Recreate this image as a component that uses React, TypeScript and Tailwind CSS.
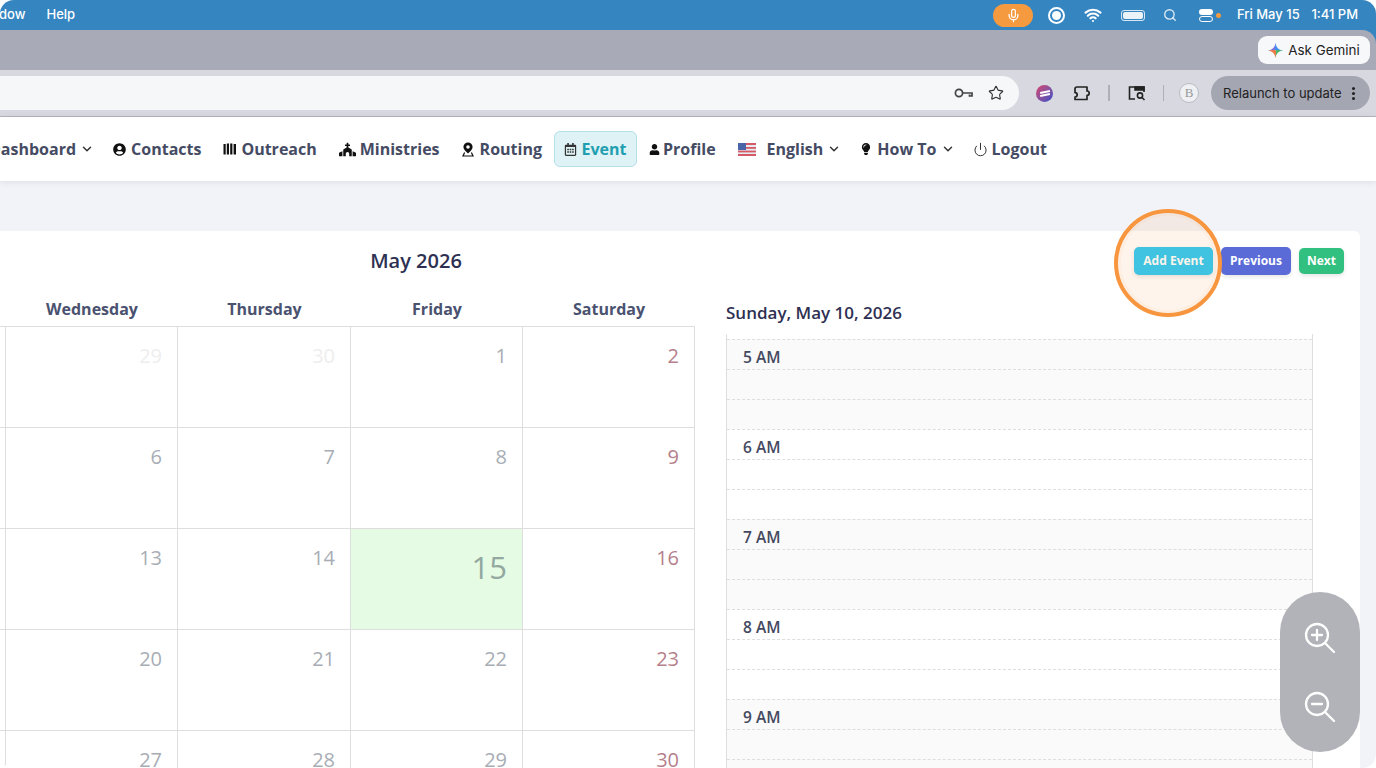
import { ChevronDown, Star, Power, Search, Wifi, Mic } from "lucide-react";
import { FaChurch, FaLightbulb, FaRegCalendarAlt, FaUser, FaUserCircle } from "react-icons/fa";

const OutreachIcon = () => (
  <svg width="14" height="12" viewBox="0 0 14 12" fill="#111">
    <rect x="0.5" y="1" width="2.2" height="10.5" />
    <rect x="3.8" y="0.5" width="2.2" height="11" />
    <rect x="7.2" y="0.5" width="2.2" height="11" />
    <rect x="10.6" y="1" width="2.4" height="10.5" />
  </svg>
);

const RoutingIcon = () => (
  <svg className="mr-[6px]" width="12" height="15" viewBox="0 0 12 15" fill="none">
    <path fillRule="evenodd" d="M6 0.5A4.6 4.6 0 0 1 10.6 5C10.6 7.6 8 9.6 6 11.5C4 9.6 1.4 7.6 1.4 5A4.6 4.6 0 0 1 6 0.5ZM6 3.2A1.8 1.8 0 1 0 6 6.8A1.8 1.8 0 0 0 6 3.2Z" fill="#111" />
    <path d="M2.6 10.5L1 14H11L9.4 10.5" stroke="#111" strokeWidth="1.2" />
  </svg>
);

const UsFlag = () => (
  <svg width="18" height="13" viewBox="0 0 18 13">
    <rect width="18" height="13" rx="1.5" fill="#e8eaf0" />
    <rect y="0" width="18" height="2" fill="#d45a68" />
    <rect y="4" width="18" height="1.8" fill="#d45a68" />
    <rect y="7.6" width="18" height="1.8" fill="#d45a68" />
    <rect y="11" width="18" height="2" fill="#d45a68" />
    <rect width="8" height="7" fill="#4a64a8" />
  </svg>
);

const GeminiIcon = () => (
  <svg width="15" height="15" viewBox="0 0 14 14">
    <path d="M7 0C7.4 3.6 7.8 6 7 7C6 7.6 3.6 7.4 0 7C4 6.5 6.5 4 7 0Z" fill="#7a6fe0" />
    <path d="M7 0C7.5 4 10 6.5 14 7C10.4 7.4 8 7.6 7 7C6.2 6 6.6 3.6 7 0Z" fill="#3f8ff0" />
    <path d="M14 7C10 7.5 7.5 10 7 14C6.6 10.4 6.2 8 7 7C8 6.4 10.4 6.6 14 7Z" fill="#4fb56a" />
    <path d="M0 7C4 7.5 6.5 10 7 14C7.4 10.4 7.8 8 7 7C6 6.4 3.6 6.6 0 7Z" fill="#ee7a45" />
  </svg>
);

const ExtensionIcon = () => (
  <svg className="ml-[19px]" width="18" height="18" viewBox="0 0 18 18" fill="none" stroke="#222" strokeWidth="1.7" strokeLinejoin="round">
    <path d="M5 3H15V7A2.2 2.2 0 0 1 15 11.4V15.5H3V13A2.2 2.2 0 0 0 3 8.6V5A2 2 0 0 1 5 3Z" />
  </svg>
);

const ZoomGlyph = ({ plus }: { plus?: boolean }) => (
  <svg width="34" height="34" viewBox="0 0 34 34" fill="none" stroke="white" strokeWidth="2.3" strokeLinecap="round">
    <circle cx="14" cy="14" r="11" />
    <path d="M22 22L31 31" />
    <path d="M9 14H19" />
    {plus && <path d="M14 9V19" />}
  </svg>
);

const NavItem = ({ icon, label, chevron, className = "" }: { icon?: React.ReactNode; label: string; chevron?: boolean; className?: string }) => (
  <div className={`flex items-center shrink-0 ${className}`}>
    {icon}
    <span className="text-[16px] font-bold text-[#454b63] whitespace-nowrap">{label}</span>
    {chevron && <ChevronDown size={14} strokeWidth={2.5} className="text-[#333] ml-[4px]" />}
  </div>
);

const MenuBar = () => (
  <div className="h-[30px] bg-[#3585c1] flex items-center text-white text-[13px] font-medium font-['Inter',sans-serif]">
    <span className="-ml-[1px]">dow</span>
    <span className="ml-[21px]">Help</span>
    <div className="ml-auto flex items-center">
      <div className="w-[40px] h-[23px] rounded-full bg-[#f59a3e] flex items-center justify-center">
        <Mic size={15} strokeWidth={2} />
      </div>
      <div className="ml-[15px] w-[17px] h-[17px] rounded-full border-2 border-white flex items-center justify-center">
        <div className="w-[9px] h-[9px] rounded-full bg-white" />
      </div>
      <Wifi size={18} strokeWidth={2.8} className="ml-[19px]" />
      <div className="ml-[19px] w-[24px] h-[11px] rounded-[3px] border border-white/80 p-[1px]">
        <div className="w-full h-full rounded-[2px] bg-white/90" />
      </div>
      <Search size={14} strokeWidth={2.4} className="ml-[18px] text-white/80" />
      <div className="ml-[22px] flex flex-col gap-[1px]">
        <div className="w-[14px] h-[6px] rounded-full bg-white" />
        <div className="w-[14px] h-[6px] rounded-full border border-white" />
      </div>
      <div className="ml-[3px] w-[5px] h-[5px] rounded-full bg-[#f59a3e]" />
      <div className="ml-[16px] mr-[18px] w-[121px] flex justify-between whitespace-nowrap">
        <span>Fri May 15</span>
        <span>1:41 PM</span>
      </div>
    </div>
  </div>
);

const BrowserChrome = () => (
  <div className="bg-[#3585c1]">
    <div className="h-[40px] bg-[#a8abb7] rounded-tr-[14px] flex items-center justify-end pr-[6px]">
      <div className="w-[112px] h-[28px] bg-[#f7f8fa] rounded-[9px] flex items-center justify-center gap-[5px] text-[13.4px] text-[#222] font-['Inter',sans-serif]">
        <GeminiIcon />
        <span>Ask Gemini</span>
      </div>
    </div>
    <div className="h-[47px] bg-[#d8d9e0] flex items-center border-b border-[#b5b6bc]">
      <div className="w-[1019px] h-[34px] bg-[#f6f7f9] rounded-r-full flex items-center justify-end pr-[15px] gap-[14px]">
        <svg width="20" height="12" viewBox="0 0 20 12" fill="none" stroke="#444" strokeWidth="1.7">
          <circle cx="5" cy="6" r="3.6" />
          <path d="M9 6H18V9H15.5V7.5" />
        </svg>
        <Star size={16} strokeWidth={1.7} className="text-[#333]" />
      </div>
      <div className="ml-[17px] w-[17px] h-[17px] rounded-full bg-gradient-to-br from-[#d83a6a] to-[#3044c8] flex flex-col items-center justify-center gap-[2px]">
        <div className="w-[10px] h-[1.5px] bg-white -rotate-12" />
        <div className="w-[10px] h-[1.5px] bg-white -rotate-12" />
      </div>
      <ExtensionIcon />
      <div className="ml-[18px] w-[1.5px] h-[16px] bg-[#aeb0b8]" />
      <svg className="ml-[18px]" width="18" height="16" viewBox="0 0 18 16" fill="none" stroke="#222" strokeWidth="1.6">
        <path d="M7 14H1.5V2H16V7" />
        <path d="M7 2H16V5H7Z" fill="#222" />
        <circle cx="12" cy="10.5" r="2.6" />
        <path d="M14 12.5L16.5 15" />
      </svg>
      <div className="ml-[17px] w-[1.5px] h-[16px] bg-[#aeb0b8]" />
      <div className="ml-[15px] w-[20px] h-[20px] rounded-full bg-[#eef0f3] border border-[#b9bbc2] flex items-center justify-center text-[13px] text-[#999] font-['Liberation_Serif',serif]">
        B
      </div>
      <div className="ml-[12px] w-[159px] h-[34px] rounded-full bg-[#a4a6b2] flex items-center pl-[12px] text-[13px] text-[#222] font-['Inter',sans-serif]">
        <span className="whitespace-nowrap pt-[1px]">Relaunch to update</span>
        <div className="ml-[10px] flex flex-col gap-[2px]">
          <div className="w-[3px] h-[3px] rounded-full bg-[#222]" />
          <div className="w-[3px] h-[3px] rounded-full bg-[#222]" />
          <div className="w-[3px] h-[3px] rounded-full bg-[#222]" />
        </div>
      </div>
    </div>
  </div>
);

const SiteNav = () => (
  <div className="h-[64px] bg-white shadow-[0_1px_6px_rgba(60,70,100,0.12)] relative flex items-center overflow-hidden">
    <NavItem label="Dashboard" chevron className="-ml-[11px]" />
    <NavItem label="Contacts" icon={<FaUserCircle size={13} className="text-[#111] mr-[5px]" />} className="ml-[19px]" />
    <NavItem label="Outreach" icon={<span className="mr-[4px] flex"><OutreachIcon /></span>} className="ml-[22px]" />
    <NavItem label="Ministries" icon={<FaChurch size={17} className="text-[#111] mr-[4px]" />} className="ml-[22px]" />
    <NavItem label="Routing" icon={<RoutingIcon />} className="ml-[22px]" />
    <div className="ml-[12px] w-[83px] h-[36px] bg-[#dff3f7] border border-[#b4e0e8] rounded-[6px] flex items-center justify-center gap-[4px]">
      <FaRegCalendarAlt size={13} className="text-[#333]" />
      <span className="text-[16px] font-bold text-[#1f9fb0]">Event</span>
    </div>
    <NavItem label="Profile" icon={<FaUser size={11} className="text-[#111] mr-[3px]" />} className="ml-[12px]" />
    <NavItem label="English" icon={<span className="mr-[11px] flex"><UsFlag /></span>} chevron className="ml-[22px]" />
    <NavItem label="How To" icon={<FaLightbulb size={12} className="text-[#111] mr-[5px]" />} chevron className="ml-[19px]" />
    <NavItem label="Logout" icon={<Power size={15} strokeWidth={1.6} className="text-[#333] mr-[4px]" />} className="ml-[18px]" />
  </div>
);

const weeks = [
  [{ d: 29, faded: true }, { d: 30, faded: true }, { d: 1 }, { d: 2 }],
  [{ d: 6 }, { d: 7 }, { d: 8 }, { d: 9 }],
  [{ d: 13 }, { d: 14 }, { d: 15, today: true }, { d: 16 }],
  [{ d: 20 }, { d: 21 }, { d: 22 }, { d: 23 }],
  [{ d: 27 }, { d: 28 }, { d: 29 }, { d: 30 }],
] as { d: number; faded?: boolean; today?: boolean }[][];

const Calendar = () => (
  <div className="w-[695px] shrink-0 mt-[17px]">
    <div className="grid grid-cols-[6px_172px_173px_172px_172px] h-[33px] items-center text-center text-[16px] font-bold text-[#4a5270]">
      <div />
      <div>Wednesday</div>
      <div>Thursday</div>
      <div>Friday</div>
      <div>Saturday</div>
    </div>
    <div className="mt-[1px] grid grid-cols-[6px_172px_173px_172px_172px] border-t border-[#dedede]">
      {weeks.map((week, i) => (
        <div key={i} className="contents">
          <div className="h-[101px] border-r border-b border-[#dedede]" />
          {week.map((c, j) => (
            <div
              key={j}
              className={`h-[101px] border-r border-b border-[#dedede] flex justify-end ${
                c.today ? "bg-[#e5fbe3] pr-[15px] pt-[24px] text-[31px] text-[#93a8a0]" : "pr-[15px] pt-[15px] text-[20px]"
              } ${c.faded ? "text-[#eeeeee]" : c.today ? "" : j === 3 ? "text-[#b57f8c]" : "text-[#a8adb5]"}`}
            >
              <span className="leading-[28px]">{c.d}</span>
            </div>
          ))}
        </div>
      ))}
    </div>
  </div>
);

const hours = ["5 AM", "6 AM", "7 AM", "8 AM", "9 AM", "10 AM"];

const DayPanel = () => (
  <div className="ml-[31px] w-[587px] shrink-0 mt-[28px]">
    <div className="text-[17px] font-semibold text-[#2e3052] leading-[20px] whitespace-nowrap">Sunday, May 10, 2026</div>
    <div className="mt-[11px] pt-[5px] border-l border-r border-[#dedede]">
      {hours.map((h, i) => (
        <div key={h} className={i % 2 === 0 ? "bg-[#fafafa]" : "bg-white"}>
          <div className="h-[30px] border-t border-dashed border-[#dedede] pl-[16px] pt-[7px] text-[15.5px] font-semibold text-[#45495f] leading-[20px]">{h}</div>
          <div className="h-[30px] border-t border-dashed border-[#dedede]" />
          <div className="h-[30px] border-t border-dashed border-[#dedede]" />
        </div>
      ))}
    </div>
  </div>
);

const App = () => {
  return (
    <div className="w-[1376px] h-[768px] bg-white overflow-hidden">
      <div className="relative w-full h-full rounded-[14px] overflow-hidden bg-[#f2f3f8] font-['Open_Sans',sans-serif]">
        <MenuBar />
        <BrowserChrome />
        <SiteNav />
        <div className="mt-[50px] mr-[16px] bg-white rounded-tr-[6px] h-[700px]">
          <div className="flex items-center pt-[16px]">
            <div className="w-[832px] text-center text-[20px] font-semibold text-[#2e3052] leading-[28px]">May 2026</div>
            <div className="ml-auto flex items-center gap-[8px] pr-[16px] text-[12px] font-bold text-white">
              <div className="w-[79px] h-[28px] rounded-[5px] bg-[#2bc9f3] flex items-center justify-center shadow-[0_2px_4px_rgba(0,0,0,0.1)]">Add Event</div>
              <div className="w-[70px] h-[28px] rounded-[5px] bg-[#5a6bd8] flex items-center justify-center shadow-[0_2px_4px_rgba(0,0,0,0.1)]">Previous</div>
              <div className="w-[45px] h-[26px] rounded-[5px] bg-[#31c080] flex items-center justify-center shadow-[0_2px_4px_rgba(0,0,0,0.1)]">Next</div>
            </div>
          </div>
          <div className="flex">
            <Calendar />
            <DayPanel />
          </div>
        </div>

        {/* step highlight over Add Event */}
        <div className="absolute left-[1114px] top-[209px] w-[108px] h-[108px] rounded-full border-[4px] border-[#f7963f] bg-[#f7963f]/10 shadow-[inset_0_0_0_3px_rgba(247,150,63,0.06)]" />

        {/* zoom control */}
        <div className="absolute left-[1280px] top-[592px] w-[80px] h-[160px] rounded-full bg-[#b2b3b8] flex flex-col items-center justify-center gap-[35px]">
          <ZoomGlyph plus />
          <ZoomGlyph />
        </div>
      </div>
    </div>
  );
};

export default App;
